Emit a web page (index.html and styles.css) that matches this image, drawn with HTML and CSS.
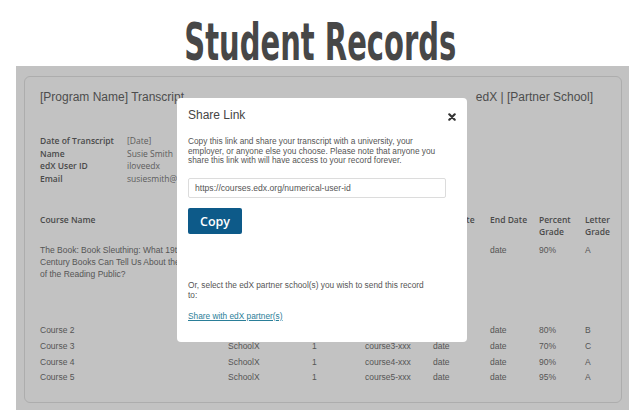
FILE: index.html
```html
<!DOCTYPE html>
<html lang="en">
<head>
    <meta charset="UTF-8">
    <meta name="viewport" content="width=device-width, initial-scale=1.0">
    <title>Student Records</title>
    <link rel="stylesheet" href="styles.css">
</head>
<body>
    <h1 class="page-title"><span>Student Records</span></h1>

    <div class="screen">
        <div class="record">
            <div class="record-head">
                <span>[Program Name] Transcript</span>
                <span>edX | [Partner School]</span>
            </div>

            <dl class="learner">
                <dt>Date of Transcript</dt><dd>[Date]</dd>
                <dt>Name</dt><dd>Susie Smith</dd>
                <dt>edX User ID</dt><dd>iloveedx</dd>
                <dt>Email</dt><dd>susiesmith@gmail.com</dd>
            </dl>

            <div class="grades">
                <div class="grade-row grade-head">
                    <div class="course-name">Course Name</div>
                    <div>School</div>
                    <div>Attempts</div>
                    <div>Course ID</div>
                    <div>Start Date</div>
                    <div>End Date</div>
                    <div>Percent Grade</div>
                    <div>Letter Grade</div>
                </div>
                <div class="grade-row first">
                    <div class="course-name">The Book: Book Sleuthing: What 19th Century Books Can Tell Us About the Era of the Reading Public?</div>
                    <div>SchoolX</div>
                    <div>1</div>
                    <div>course1-xxx</div>
                    <div>date</div>
                    <div>date</div>
                    <div>90%</div>
                    <div>A</div>
                </div>
                <div class="grade-row">
                    <div class="course-name">Course 2</div>
                    <div>SchoolX</div>
                    <div>1</div>
                    <div>course2-xxx</div>
                    <div>date</div>
                    <div>date</div>
                    <div>80%</div>
                    <div>B</div>
                </div>
                <div class="grade-row">
                    <div class="course-name">Course 3</div>
                    <div>SchoolX</div>
                    <div>1</div>
                    <div>course3-xxx</div>
                    <div>date</div>
                    <div>date</div>
                    <div>70%</div>
                    <div>C</div>
                </div>
                <div class="grade-row">
                    <div class="course-name">Course 4</div>
                    <div>SchoolX</div>
                    <div>1</div>
                    <div>course4-xxx</div>
                    <div>date</div>
                    <div>date</div>
                    <div>90%</div>
                    <div>A</div>
                </div>
                <div class="grade-row">
                    <div class="course-name">Course 5</div>
                    <div>SchoolX</div>
                    <div>1</div>
                    <div>course5-xxx</div>
                    <div>date</div>
                    <div>date</div>
                    <div>95%</div>
                    <div>A</div>
                </div>
            </div>
        </div>

        <!-- share dialog over the record -->
        <div class="share">
            <div class="share-head">
                <span>Share Link</span>
                <svg class="close" width="8" height="8" viewBox="0 0 10 10">
                    <path d="M1.6 1.6L8.4 8.4M8.4 1.6L1.6 8.4" stroke="#333" stroke-width="2.7" stroke-linecap="round"/>
                </svg>
            </div>
            <p>Copy this link and share your transcript with a university, your employer, or anyone else you choose. Please note that anyone you share this link with will have access to your record forever.</p>
            <input class="share-url" type="text" value="https://courses.edx.org/numerical-user-id">
            <button class="copy-btn">Copy</button>
            <p class="note">Or, select the edX partner school(s) you wish to send this record to:</p>
            <a class="share-link" href="#">Share with edX partner(s)</a>
        </div>
    </div>
</body>
</html>
```

FILE: styles.css
```css
body {
    margin: 0;
    height: 410px;
    overflow: hidden;
    background-color: #fff;
    font-family: "Liberation Sans", Arial, sans-serif;
    color: #555;
}
.page-title {
    margin: 0;
    height: 66px;
    box-sizing: border-box;
    padding-top: 16px;
    text-align: center;
    font-family: "DejaVu Sans Condensed", "DejaVu Sans", sans-serif;
    font-stretch: condensed;
    font-weight: bold;
    font-size: 52px;
    line-height: 52px;
    color: #474747;
}
.page-title span {
    display: inline-block;
    transform: scaleX(0.62);
}
.screen {
    position: relative;
    margin-left: 16px;
    width: 613px;
    height: 344px;
    box-sizing: border-box;
    padding: 10px 7px 0 8px;
    background-color: #c2c2c2;
}
.record {
    height: 327px;
    box-sizing: border-box;
    border: 1px solid #adadad;
    border-radius: 6px;
    padding: 12px 15px 0 15px;
}
.record-head {
    display: flex;
    justify-content: space-between;
    padding-right: 13px;
    font-size: 12px;
    line-height: 16px;
    color: #4d4d4d;
}
.learner {
    display: grid;
    grid-template-columns: 87px auto;
    margin: 30px 0 0;
    font-family: "Open Sans", sans-serif;
    font-size: 8.5px;
    line-height: 12.7px;
}
.learner dt {
    font-weight: 600;
    color: #4a4a4a;
}
.learner dd {
    margin: 0;
    color: #5c5c5c;
}
.grades {
    margin-top: 28px;
    font-size: 8.5px;
    line-height: 12px;
}
.grade-row {
    display: grid;
    grid-template-columns: 188px 84px 53px 68px 57px 49px 46px minmax(0, 1fr);
    padding: 1.8px 0;
}
.grade-head {
    padding: 0 0 4px;
    font-family: "Open Sans", sans-serif;
    font-weight: 600;
    color: #4a4a4a;
}
.grade-row.first {
    padding-bottom: 43px;
}
.course-name {
    padding-right: 27px;
}
.share {
    position: absolute;
    left: 161px;
    top: 32px;
    width: 290px;
    height: 244px;
    box-sizing: border-box;
    padding: 9px 11px 0;
    background-color: #fff;
    border-radius: 4px;
}
.share-head {
    display: flex;
    justify-content: space-between;
    align-items: center;
    font-size: 12px;
    line-height: 16px;
    color: #454545;
}
.close {
    margin-top: 4px;
}
.share p {
    margin: 14px 0 0;
    width: 258px;
    font-size: 8.3px;
    line-height: 9.5px;
}
.share .note {
    margin-top: 45.75px;
    width: 236px;
    line-height: 10.5px;
}
.share-url {
    display: block;
    margin-top: 12.5px;
    width: 258px;
    height: 20px;
    box-sizing: border-box;
    border: 1px solid #dcdcdc;
    border-radius: 2px;
    padding: 0 6px;
    font-family: "Liberation Sans", Arial, sans-serif;
    font-size: 8.6px;
    color: #555;
}
.copy-btn {
    display: block;
    margin-top: 10px;
    width: 54px;
    height: 26px;
    padding: 0;
    border: none;
    border-radius: 2px;
    background-color: #0d5a89;
    color: #fff;
    font-family: "Open Sans", sans-serif;
    font-weight: 600;
    font-size: 12.5px;
}
.share-link {
    display: block;
    margin-top: 10px;
    font-size: 8.3px;
    line-height: 11px;
    color: #2a7e98;
}
```
